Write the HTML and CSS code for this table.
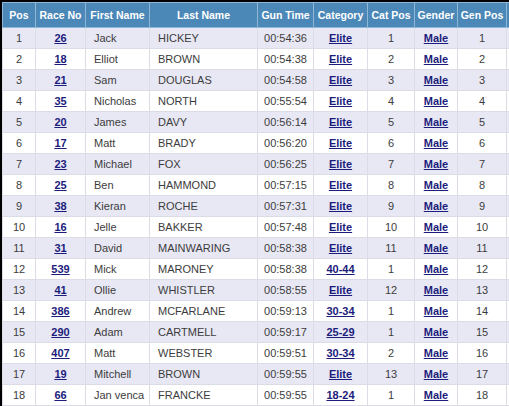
FILE: index.html
```html
<!DOCTYPE html>
<html>
<head>
<meta charset="utf-8">
<link rel="stylesheet" href="styles.css">
</head>
<body>
<div class="frame">
<table class="results">
<colgroup>
<col class="c-pos"><col class="c-race"><col class="c-first"><col class="c-last"><col class="c-gun"><col class="c-cat"><col class="c-catpos"><col class="c-gender"><col class="c-genpos"><col class="c-extra">
</colgroup>
<thead>
<tr><th>Pos</th><th>Race No</th><th>First Name</th><th>Last Name</th><th>Gun Time</th><th>Category</th><th>Cat Pos</th><th>Gender</th><th>Gen Pos</th><th></th></tr>
</thead>
<tbody>
<tr><td>1</td><td><a href="#">26</a></td><td class="l">Jack</td><td class="l">HICKEY</td><td>00:54:36</td><td><a href="#">Elite</a></td><td>1</td><td><a href="#">Male</a></td><td>1</td><td></td></tr>
<tr><td>2</td><td><a href="#">18</a></td><td class="l">Elliot</td><td class="l">BROWN</td><td>00:54:38</td><td><a href="#">Elite</a></td><td>2</td><td><a href="#">Male</a></td><td>2</td><td></td></tr>
<tr><td>3</td><td><a href="#">21</a></td><td class="l">Sam</td><td class="l">DOUGLAS</td><td>00:54:58</td><td><a href="#">Elite</a></td><td>3</td><td><a href="#">Male</a></td><td>3</td><td></td></tr>
<tr><td>4</td><td><a href="#">35</a></td><td class="l">Nicholas</td><td class="l">NORTH</td><td>00:55:54</td><td><a href="#">Elite</a></td><td>4</td><td><a href="#">Male</a></td><td>4</td><td></td></tr>
<tr><td>5</td><td><a href="#">20</a></td><td class="l">James</td><td class="l">DAVY</td><td>00:56:14</td><td><a href="#">Elite</a></td><td>5</td><td><a href="#">Male</a></td><td>5</td><td></td></tr>
<tr><td>6</td><td><a href="#">17</a></td><td class="l">Matt</td><td class="l">BRADY</td><td>00:56:20</td><td><a href="#">Elite</a></td><td>6</td><td><a href="#">Male</a></td><td>6</td><td></td></tr>
<tr><td>7</td><td><a href="#">23</a></td><td class="l">Michael</td><td class="l">FOX</td><td>00:56:25</td><td><a href="#">Elite</a></td><td>7</td><td><a href="#">Male</a></td><td>7</td><td></td></tr>
<tr><td>8</td><td><a href="#">25</a></td><td class="l">Ben</td><td class="l">HAMMOND</td><td>00:57:15</td><td><a href="#">Elite</a></td><td>8</td><td><a href="#">Male</a></td><td>8</td><td></td></tr>
<tr><td>9</td><td><a href="#">38</a></td><td class="l">Kieran</td><td class="l">ROCHE</td><td>00:57:31</td><td><a href="#">Elite</a></td><td>9</td><td><a href="#">Male</a></td><td>9</td><td></td></tr>
<tr><td>10</td><td><a href="#">16</a></td><td class="l">Jelle</td><td class="l">BAKKER</td><td>00:57:48</td><td><a href="#">Elite</a></td><td>10</td><td><a href="#">Male</a></td><td>10</td><td></td></tr>
<tr><td>11</td><td><a href="#">31</a></td><td class="l">David</td><td class="l">MAINWARING</td><td>00:58:38</td><td><a href="#">Elite</a></td><td>11</td><td><a href="#">Male</a></td><td>11</td><td></td></tr>
<tr><td>12</td><td><a href="#">539</a></td><td class="l">Mick</td><td class="l">MARONEY</td><td>00:58:38</td><td><a href="#">40-44</a></td><td>1</td><td><a href="#">Male</a></td><td>12</td><td></td></tr>
<tr><td>13</td><td><a href="#">41</a></td><td class="l">Ollie</td><td class="l">WHISTLER</td><td>00:58:55</td><td><a href="#">Elite</a></td><td>12</td><td><a href="#">Male</a></td><td>13</td><td></td></tr>
<tr><td>14</td><td><a href="#">386</a></td><td class="l">Andrew</td><td class="l">MCFARLANE</td><td>00:59:13</td><td><a href="#">30-34</a></td><td>1</td><td><a href="#">Male</a></td><td>14</td><td></td></tr>
<tr><td>15</td><td><a href="#">290</a></td><td class="l">Adam</td><td class="l">CARTMELL</td><td>00:59:17</td><td><a href="#">25-29</a></td><td>1</td><td><a href="#">Male</a></td><td>15</td><td></td></tr>
<tr><td>16</td><td><a href="#">407</a></td><td class="l">Matt</td><td class="l">WEBSTER</td><td>00:59:51</td><td><a href="#">30-34</a></td><td>2</td><td><a href="#">Male</a></td><td>16</td><td></td></tr>
<tr><td>17</td><td><a href="#">19</a></td><td class="l">Mitchell</td><td class="l">BROWN</td><td>00:59:55</td><td><a href="#">Elite</a></td><td>13</td><td><a href="#">Male</a></td><td>17</td><td></td></tr>
<tr><td>18</td><td><a href="#">66</a></td><td class="l">Jan venca</td><td class="l">FRANCKE</td><td>00:59:55</td><td><a href="#">18-24</a></td><td>1</td><td><a href="#">Male</a></td><td>18</td><td></td></tr>
</tbody>
</table>
</div>
</body>
</html>
```
FILE: styles.css
```css
html, body {
  margin: 0;
  padding: 0;
  background: #000;
  overflow: hidden;
  height: 406px;
}
.frame {
  padding: 2px 0 0 2px;
}
.results {
  border-collapse: collapse;
  table-layout: fixed;
  width: 507px;
  font-family: "Liberation Sans", Arial, sans-serif;
  font-size: 11px;
  color: #3c3c3c;
  background: #fff;
  border: 1px solid #dcdce4;
}
.c-pos { width: 33px; }
.c-race { width: 50px; }
.c-first { width: 64px; }
.c-last { width: 108px; }
.c-gun { width: 56px; }
.c-cat { width: 54px; }
.c-catpos { width: 47px; }
.c-gender { width: 43px; }
.c-genpos { width: 49px; }
.c-extra { width: 3px; }
.results th {
  background: #4b88b8;
  color: #fff;
  font-weight: bold;
  font-size: 10.5px;
  height: 24px;
  padding: 0;
  border: 1px solid #8fb7d6;
  white-space: nowrap;
  text-align: center;
}
.results td {
  height: 20px;
  padding: 0;
  text-align: center;
  border: 1px solid #dcdce6;
  white-space: nowrap;
  overflow: hidden;
}
.results td.l {
  text-align: left;
  padding-left: 8px;
}
.results tbody tr:nth-child(odd) td {
  background: #e8e8f4;
}
.results tbody tr:nth-child(even) td {
  background: #fff;
}
.results a {
  color: #1c1c7c;
  font-weight: bold;
  text-decoration: underline;
}
```
